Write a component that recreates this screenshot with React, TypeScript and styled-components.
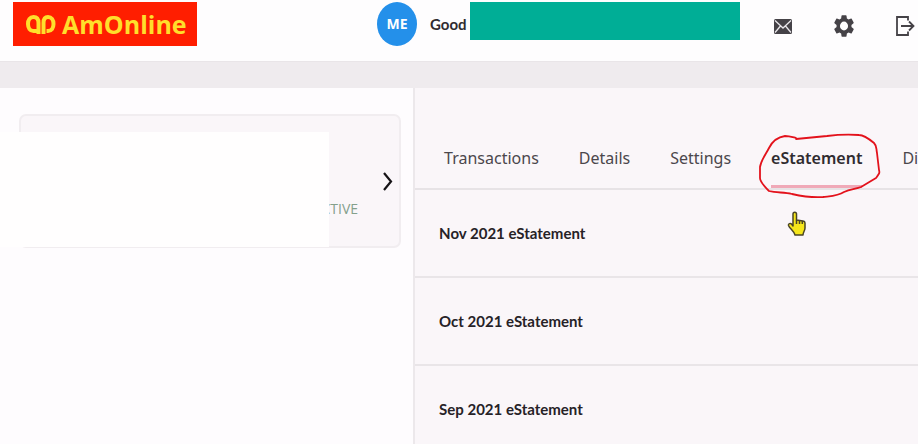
import React from "react";
import styled, { createGlobalStyle, css } from "styled-components";

const Global = createGlobalStyle`
  *, *::before, *::after { box-sizing: border-box; }
  body { margin: 0; background: #fefcfe; color: #2f2b30; font-family: "Noto Sans", sans-serif; }
  button { font: inherit; color: inherit; background: none; border: 0; padding: 0; cursor: pointer; }
`;

const Page = styled.div`
  min-height: 100vh;
  display: flex;
  flex-direction: column;
  overflow: hidden;
`;

const Header = styled.header`
  display: flex;
  align-items: flex-start;
  height: 61px;
  padding: 2px 3px 0 13px;
  background: #fefdfe;
`;

const HeaderSide = styled.div`
  flex: 0 0 364px;
`;

const Logo = styled.a`
  display: flex;
  align-items: center;
  gap: 6px;
  width: 184px;
  height: 44px;
  padding-left: 12px;
  background: #ff1e00;
  color: #ffdf2b;
  font: 700 25px/44px "Open Sans", sans-serif;
  text-decoration: none;
  white-space: nowrap;
`;

const Avatar = styled.div`
  flex: none;
  width: 40px;
  height: 44px;
  border-radius: 50%;
  background: #2490ea;
  color: #fff;
  font-size: 14px;
  font-weight: 700;
  line-height: 43px;
  text-align: center;
`;

const Greeting = styled.div`
  flex: none;
  width: 53px;
  padding-left: 13px;
  font-family: Lato, sans-serif;
  font-size: 15px;
  font-weight: 700;
  line-height: 44px;
`;

const NameCover = styled.div`
  flex: 0 1 270px;
  height: 38px;
  background: #00ae96;
`;

const HeaderActions = styled.nav`
  flex: none;
  display: flex;
  align-items: center;
  gap: 42px;
  height: 48px;
  margin-left: auto;
  color: #454247;
`;

const IconButton = styled.button`
  display: flex;
`;

const Band = styled.div`
  height: 27px;
  background: #efebee;
  border-top: 1px solid #e9e5e8;
`;

const Main = styled.main`
  flex: 1;
  display: grid;
  grid-template-columns: 45fr 55fr;
`;

const Accounts = styled.aside`
  position: relative;
  padding: 26px 12px 0 19px;
`;

const AccountCard = styled.button`
  && {
    display: flex;
    align-items: center;
    justify-content: flex-end;
    gap: 25px;
    width: 100%;
    height: 134px;
    padding-right: 6px;
    border: 2px solid #f1edf0;
    border-radius: 7px;
    background: #faf6f9;
  }
`;

const Status = styled.span`
  padding-top: 56px;
  color: #84a08c;
  font-family: "Open Sans", sans-serif;
  font-size: 14px;
  line-height: 20px;
`;

const AccountCover = styled.div`
  position: absolute;
  top: 44px;
  left: 0;
  right: 84px;
  height: 115px;
  background: #fffefe;
`;

const Panel = styled.section`
  min-width: 0;
  border-left: 2px solid #ece8eb;
  background: #faf6f9;
`;

const Tabs = styled.div`
  display: flex;
  align-items: flex-end;
  gap: 40px;
  height: 102px;
  padding-left: 29px;
  border-bottom: 2px solid #e7e3e6;
`;

const Tab = styled.button<{ $active?: boolean }>`
  && {
    position: relative;
    flex: none;
    height: 56px;
    border-bottom: 3px solid transparent;
    color: #4b474c;
    font-size: 16px;
    line-height: 50px;
    padding-bottom: 2px;
    white-space: nowrap;
    ${(p) =>
      p.$active &&
      css`
        border-bottom-color: #f0a9b8;
        color: #2f2b30;
        font-weight: 600;
      `}
  }
`;

const Circle = styled.svg`
  position: absolute;
  top: 0;
  left: -13px;
  overflow: visible;
  pointer-events: none;
`;

const Pointer = styled.svg`
  position: absolute;
  top: 79px;
  left: 16px;
  pointer-events: none;
`;

const Statements = styled.ul`
  margin: 0;
  padding: 0;
  list-style: none;
`;

const Statement = styled.li`
  height: 88px;
  padding-left: 24px;
  border-bottom: 2px solid #e9e5e8;
  font-family: Lato, sans-serif;
  font-size: 15px;
  font-weight: 700;
  line-height: 86px;
  color: #262227;

  &:last-child { height: 78px; border-bottom: 0; }
`;

const TABS = ["Transactions", "Details", "Settings", "eStatement", "Di"];
const MONTHS = ["Nov 2021", "Oct 2021", "Sep 2021"];

const LogoMark = () => (
  <svg width="31" height="21" viewBox="0 0 31 21" fill="none" stroke="currentColor" strokeWidth="4" aria-hidden="true">
    <path d="M13.500 20V9C13.500 5 11.500 3 8.500 3C5 3 3 6 3 10C3 14 5 17 8.500 17H12" />
    <path d="M18.500 20V9C18.500 5 20 3 23 3C26.500 3 28.500 6 28.500 10C28.500 14 26.500 17 23 17H21.500" />
  </svg>
);

const MailIcon = () => (
  <svg width="18" height="15" viewBox="0 0 18 15" aria-hidden="true">
    <rect width="18" height="15" rx="1.500" fill="currentColor" />
    <path d="M1 1.500L9 9L17 1.500M1 13.500L6.500 7M17 13.500L11.500 7" fill="none" stroke="#e9e6ea" strokeWidth="1.300" />
  </svg>
);

const GearIcon = () => (
  <svg width="20" height="22" viewBox="2.400 2.200 19.200 19.600" preserveAspectRatio="none" aria-hidden="true">
    <path
      fill="currentColor"
      d="M19.140 12.940c.04-.3.060-.61.060-.94s-.02-.64-.07-.94l2.030-1.580a.49.49 0 0 0 .12-.61l-1.920-3.320a.49.49 0 0 0-.59-.22l-2.390.96a7 7 0 0 0-1.620-.94l-.36-2.540a.48.48 0 0 0-.48-.41h-3.840a.47.47 0 0 0-.47.41l-.36 2.540a7.300 7.300 0 0 0-1.620.94l-2.390-.96a.48.48 0 0 0-.59.220L2.740 8.870a.47.47 0 0 0 .12.610l2.030 1.580a6 6 0 0 0 0 1.880l-2.030 1.580a.49.49 0 0 0-.12.610l1.920 3.320c.12.220.37.290.59.220l2.390-.96c.5.380 1.030.7 1.620.94l.36 2.540c.05.240.24.410.48.410h3.840c.24 0 .44-.17.470-.41l.36-2.540a7.300 7.300 0 0 0 1.620-.94l2.390.96c.22.080.47 0 .59-.22l1.920-3.320a.47.47 0 0 0-.12-.61zM12 15.900a3.900 3.900 0 1 1 0-7.800 3.900 3.900 0 0 1 0 7.800z"
    />
  </svg>
);

const ExitIcon = () => (
  <svg width="19" height="20" viewBox="0 0 19 20" fill="none" stroke="currentColor" strokeWidth="1.800" aria-hidden="true">
    <path d="M12 4.500V1H1V19H12V15.500M5 10H17M13 5.500L17.500 10L13 14.500" />
  </svg>
);

export default function App() {
  return (
    <>
      <Global />
      <Page>
        <Header>
          <HeaderSide>
            <Logo href="#">
              <LogoMark />
              AmOnline
            </Logo>
          </HeaderSide>
          <Avatar>ME</Avatar>
          <Greeting>Good</Greeting>
          <NameCover />
          <HeaderActions>
            <IconButton aria-label="Messages"><MailIcon /></IconButton>
            <IconButton aria-label="Preferences"><GearIcon /></IconButton>
            <IconButton aria-label="Log out"><ExitIcon /></IconButton>
          </HeaderActions>
        </Header>
        <Band />
        <Main>
          <Accounts>
            <AccountCard>
              <Status>CTIVE</Status>
              <svg width="10" height="19" viewBox="0 0 10 19" fill="none" stroke="#161316" strokeWidth="2.200" aria-hidden="true">
                <path d="M1 1L8 9.500L1 18" />
              </svg>
            </AccountCard>
            <AccountCover />
          </Accounts>
          <Panel>
            <Tabs role="tablist">
              {TABS.map((name) => {
                const active = name === "eStatement";
                return (
                  <Tab key={name} role="tab" aria-selected={active} $active={active}>
                    {name}
                    {active && (
                      <>
                        <Circle width="122" height="66" viewBox="758 131 122 66" fill="none" stroke="#e3121c" strokeWidth="1.800" strokeLinejoin="round" aria-hidden="true">
                          <path d="M796 137C792 136 789 135 785 135C778 136 772 141 769 147C766 153 761 159 760 166L760 177C760 181 765 186 769 190C777 192 784 191 792 193C801 195 811 197 823 196C831 195 838 195 844 191C850 188 856 188 861 186L876 177C879 173 880 172 879 169L877 152C876 147 877 145 874 142C868 137 864 134 859 134C845 133 835 134 827 135L796 138Z" />
                        </Circle>
                        <Pointer width="20" height="26" viewBox="0 0 20 26" fill="#f5e61b" stroke="#4a4526" strokeWidth="1.500" strokeLinejoin="round" aria-hidden="true">
                          <path d="M6 14V3C6 0.500 9.500 0.500 9.500 3V9L16 10C17.500 10.200 18 11 18 12V17C18 20 16 21 16 24H8C7 20 3 18 1.500 14.500C1 12.500 3.500 12 4.500 13L6 15Z" />
                          <path d="M9.500 9V13M12.500 9.500V13M15.300 10V13" fill="none" />
                        </Pointer>
                      </>
                    )}
                  </Tab>
                );
              })}
            </Tabs>
            <Statements>
              {MONTHS.map((month) => (
                <Statement key={month}>{month} eStatement</Statement>
              ))}
            </Statements>
          </Panel>
        </Main>
      </Page>
    </>
  );
}
